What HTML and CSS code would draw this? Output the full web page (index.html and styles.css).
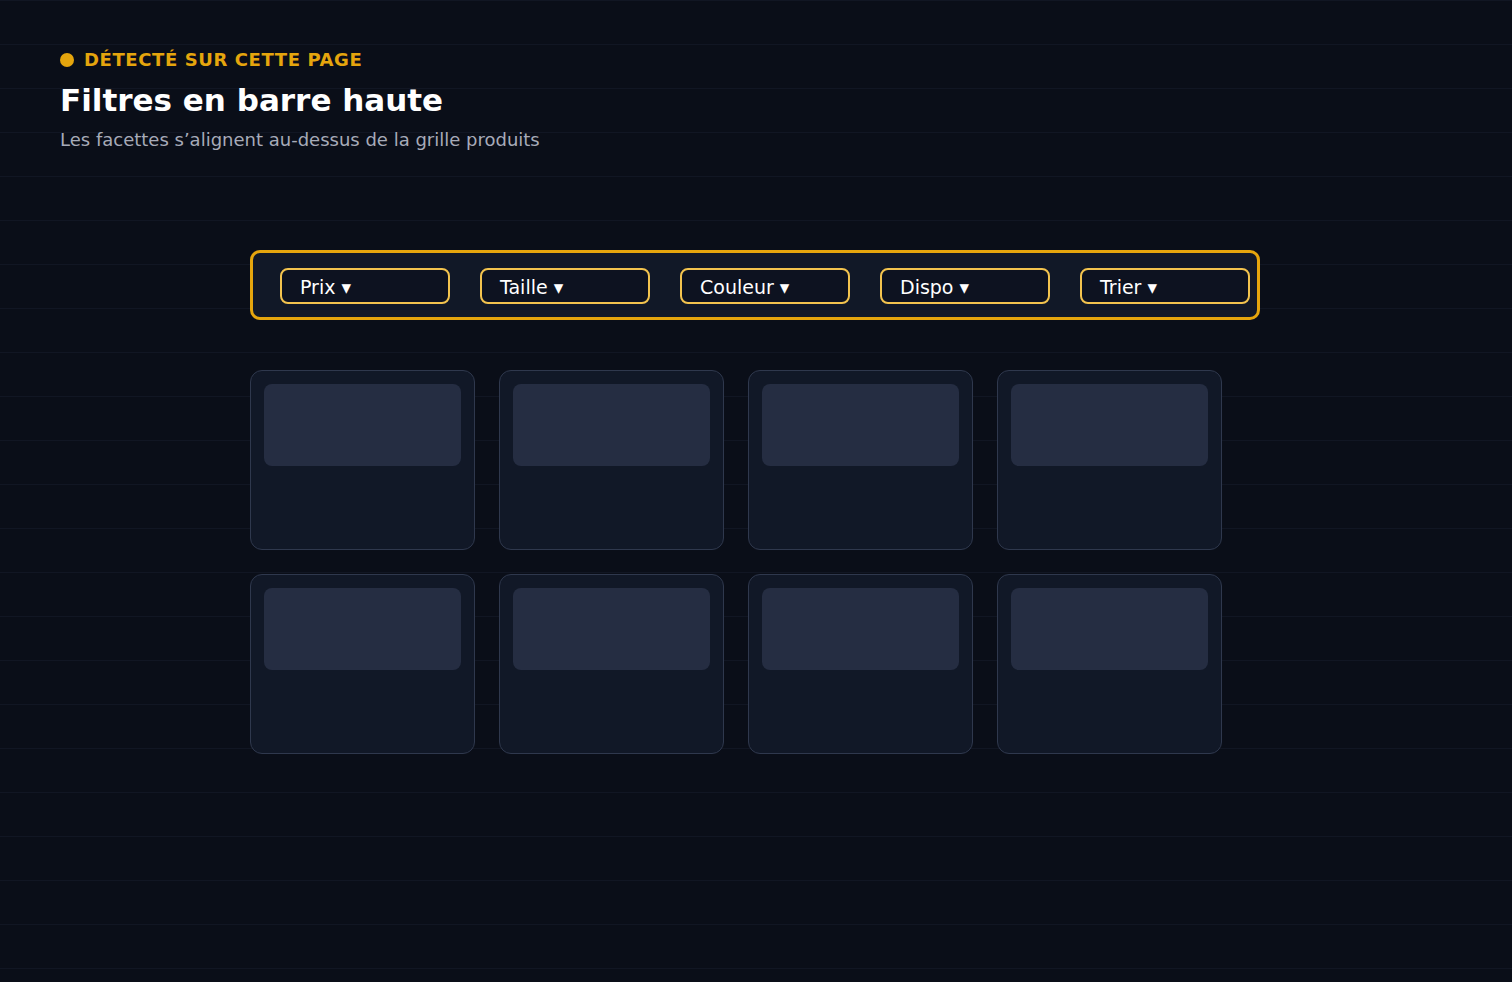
FILE: index.html
```html
<!DOCTYPE html>
<html lang="fr">
<head>
    <meta charset="utf-8">
    <title>Filtres en barre haute</title>
    <link rel="stylesheet" href="styles.css">
</head>
<body>
    <header class="intro">
        <p class="eyebrow"><span class="dot"></span>Détecté sur cette page</p>
        <h1 class="title">Filtres en barre haute</h1>
        <p class="subtitle">Les facettes s’alignent au-dessus de la grille produits</p>
    </header>

    <main class="shop">
        <div class="filter-bar">
            <button class="chip">Prix ▾</button>
            <button class="chip">Taille ▾</button>
            <button class="chip">Couleur ▾</button>
            <button class="chip">Dispo ▾</button>
            <button class="chip">Trier ▾</button>
        </div>

        <div class="grid">
            <div class="card"><div class="thumb"></div></div>
            <div class="card"><div class="thumb"></div></div>
            <div class="card"><div class="thumb"></div></div>
            <div class="card"><div class="thumb"></div></div>
            <div class="card"><div class="thumb"></div></div>
            <div class="card"><div class="thumb"></div></div>
            <div class="card"><div class="thumb"></div></div>
            <div class="card"><div class="thumb"></div></div>
        </div>
    </main>
</body>
</html>
```

FILE: styles.css
```css
:root {
    --bg: #0a0e18;
    --line: #111623;
    --panel: #111827;
    --edge: #2f384d;
    --thumb: #252d42;
    --amber: #e5a50d;
    --chip-edge: #f2c34e;
    --muted: #a7abb8;
}

* {
    box-sizing: border-box;
}

body {
    margin: 0;
    min-height: 100vh;
    font-family: "DejaVu Sans", Verdana, sans-serif;
    color: #fff;
    background-color: var(--bg);
    /* faint ruled lines every 44px */
    background-image: linear-gradient(to bottom, var(--line) 1px, transparent 1px);
    background-size: 100% 44px;
}

.intro {
    padding: 49px 60px 0;
}

.eyebrow {
    display: flex;
    align-items: center;
    gap: 10px;
    margin: 0;
    font-size: 18px;
    font-weight: bold;
    letter-spacing: 0.6px;
    text-transform: uppercase;
    color: var(--amber);
}

.dot {
    width: 14px;
    height: 14px;
    border-radius: 50%;
    background-color: var(--amber);
}

.title {
    margin: 12px 0 0;
    font-size: 31px;
    font-weight: bold;
    line-height: 1.2;
}

.subtitle {
    margin: 10px 0 0;
    font-size: 18px;
    color: var(--muted);
}

.shop {
    padding: 100px 0 0 250px;
}

.filter-bar {
    display: flex;
    align-items: center;
    gap: 30px;
    width: 1010px;
    height: 70px;
    padding: 2px 0 0 27px;
    border: 3px solid var(--amber);
    border-radius: 10px;
    background-color: var(--panel);
}

.chip {
    flex-shrink: 0;
    width: 170px;
    height: 36px;
    padding: 2px 0 0 18px;
    text-align: left;
    font-family: inherit;
    font-size: 19px;
    color: #fff;
    background-color: #0d1220;
    border: 2px solid var(--chip-edge);
    border-radius: 8px;
}

.grid {
    display: grid;
    grid-template-columns: repeat(4, 225px);
    grid-auto-rows: 180px;
    gap: 24px;
    margin-top: 50px;
}

.card {
    padding: 13px;
    border: 1px solid var(--edge);
    border-radius: 12px;
    background-color: var(--panel);
}

.thumb {
    height: 82px;
    border-radius: 8px;
    background-color: var(--thumb);
}
```
